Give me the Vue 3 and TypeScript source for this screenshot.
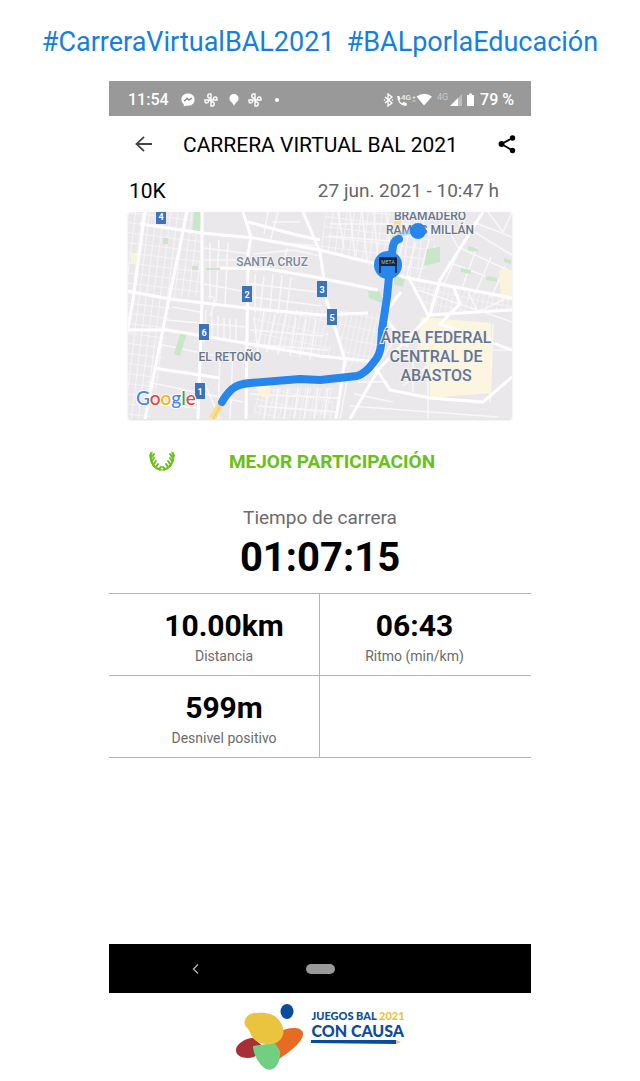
<script setup lang="ts">
interface Stat {
  value: string
  label: string
}

interface Marker {
  n: number
  x: number
  y: number
}

const stats: Stat[] = [
  { value: '10.00km', label: 'Distancia' },
  { value: '06:43', label: 'Ritmo (min/km)' },
  { value: '599m', label: 'Desnivel positivo' },
]

const markers: Marker[] = [
  { n: 4, x: 33, y: 4 },
  { n: 2, x: 119, y: 82 },
  { n: 3, x: 194, y: 77 },
  { n: 5, x: 204, y: 105 },
  { n: 6, x: 76, y: 120 },
  { n: 1, x: 72, y: 179 },
]

const mainRoads: string[] = [
  'M17 0L5 88L0 116',
  'M59 0L42 82L17 207',
  'M74 0V88L70 207',
  'M115 0L123 25L120 42L118 207',
  'M12 12L74 21L126 26L192 38L245 51L275 65L384 86',
  'M0 79L42 87L119 96L192 103L240 101',
  'M0 118L39 118L99 128L192 144L250 150',
  'M25 156L92 166',
  'M175 0L192 40L199 90L217 148L208 207',
  'M355 0L312 68L302 103L250 158L222 207',
  'M247 155L262 178L302 186L355 190L384 165',
  'M302 103L384 98',
  'M120 10L165 22L192 28',
  'M92 56L140 57L192 66L250 78',
  'M280 64L300 103',
  'M325 73L332 92L312 112L384 138',
  'M273 80L255 103L280 135',
]

const sideRoads: string[] = [
  'M125 42L165 38L192 44M140 0L136 22M150 0L142 30L190 34M159 36L155 55M144 10H172',
  'M82 30V88M91 28L88 90M100 30L97 92M76 36L122 42M76 48H120M76 72L119 80',
  'M127 62V100M136 64L132 100M145 62L142 98M154 64L150 102M163 65L158 104M122 72L190 80M124 85L194 94',
  'M44 95L72 100M38 108L118 115M78 98L76 130M84 100V126M90 104V126M96 106V128M102 106V130M108 107V130',
  'M80 85Q88 83 86 92L82 104M30 132L118 150M20 170L115 190M8 190L70 196M76 170L92 207M92 140L90 207M105 140L102 207',
  'M126 105L130 140M136 98L130 134M147 103L139 140M158 104L150 142M168 106L162 144M178 107L172 145M188 108L182 148',
  'M122 118L195 124M122 132L200 138M122 182L210 186M130 194L210 200M140 176L136 207M150 176L146 207M160 176L156 207M170 176L166 207M180 176L176 207M190 176L186 207M200 176L196 207',
  'M202 12H280M200 24L275 30M210 0L216 36M222 0L227 44M234 0L239 48M246 0L250 50M258 0L264 50',
  'M275 30L262 80M288 30L278 66M301 28L290 70M310 0L330 35L384 60M335 30L316 72M349 35L334 76M363 45L347 82M377 54L363 86M320 50L384 74',
  'M345 10L384 25M360 0L375 20L384 0M340 16L384 43M290 78L384 110M340 80L350 100L384 84',
  'M220 164L212 207M230 170H260M226 182L265 190M222 194L370 205M265 130L246 158M275 174L310 145M285 140V180M300 113V207M365 112L362 190M384 138H365',
]
</script>

<template>
  <main class="page">
    <h1 class="tags">
      <a href="#carrera">#CarreraVirtualBAL2021</a>
      <a href="#causa">#BALporlaEducación</a>
    </h1>

    <section class="phone">
      <div class="status">
        <span class="clock">11:54</span>
        <svg class="glyph messenger" width="14" height="14" viewBox="0 0 14 14">
          <path d="M7 0.5C3 .5.4 3.200.4 6.600c0 2 .9 3.600 2.400 4.700v2.300l2.300-1.200c4.600 1.200 8.500-1.600 8.500-5.700C13.600 3.200 11 .5 7 .5z" fill="#fff" />
          <path d="M3.200 8.200L6 5.200l2 1.900 2.900-1.900" fill="none" stroke="#8a8a8a" stroke-width="1.500" />
        </svg>
        <svg class="glyph" width="14" height="14" viewBox="0 0 14 14">
          <path d="M7 7V1H5.500Q3.800 1 3.800 3T5.500 5H7M7 7h6V5.500Q13 4 11.300 4T9.500 5.500V7M7 7v6h1.500q1.700 0 1.700-2T8.500 9H7M7 7H1v1.500Q1 10 2.700 10T4.500 8.500V7" fill="none" stroke="#fff" stroke-width="1.400" />
        </svg>
        <svg class="glyph pin" width="10" height="12" viewBox="0 0 10 12">
          <path d="M5 0a4.600 4.600 0 0 1 4.600 4.600C9.600 7.500 6.200 8.500 5 12 3.800 8.500.4 7.500.4 4.600A4.600 4.600 0 0 1 5 0z" fill="#fff" />
        </svg>
        <svg class="glyph" width="14" height="14" viewBox="0 0 14 14">
          <path d="M7 7V1H5.500Q3.800 1 3.800 3T5.500 5H7M7 7h6V5.500Q13 4 11.300 4T9.500 5.500V7M7 7v6h1.500q1.700 0 1.700-2T8.500 9H7M7 7H1v1.500Q1 10 2.700 10T4.500 8.500V7" fill="none" stroke="#fff" stroke-width="1.400" />
        </svg>
        <i class="dot"></i>
        <svg class="signals" width="94" height="16" viewBox="0 0 94 16">
          <path d="M2 5l7 6-4 3V2l4 3-7 6" fill="none" stroke="#fff" stroke-width="1.300" />
          <circle cx="1.500" cy="8" r=".8" fill="#fff" /><circle cx="9.500" cy="8" r=".8" fill="#fff" />
          <path d="M14 4h2.500l1 3-1.200 1.300q1 2 2.700 3L20.500 10l3.300 1v2.500Q15.500 15 14 4z" fill="#fff" />
          <text x="18" y="8" font-size="8" font-weight="500" fill="#eee">4G</text>
          <path d="M29.500 5.500h3M31 4v3M29.500 9h3" stroke="#ddd" stroke-width="1" />
          <path d="M33.500 4.500Q41-1 49 4.500L41 13.500z" fill="#fff" />
          <text x="54" y="8" font-size="9" font-weight="400" fill="#c9c9c9">4G</text>
          <path d="M67 14L79 2v12z" fill="#bdbdbd" /><path d="M67 14l8-8v8z" fill="#fff" />
          <path d="M84 3h2V1.500h3V3h2v11h-7z" fill="#fff" />
        </svg>
        <span class="battery">79 %</span>
      </div>

      <header class="bar">
        <button class="icon back" type="button" aria-label="Volver">
          <svg width="18" height="18" viewBox="0 0 18 18">
            <path d="M17 8H2M9 .8L1.500 8 9 15.200" fill="none" stroke="#444" stroke-width="1.800" />
          </svg>
        </button>
        <h2>CARRERA VIRTUAL BAL 2021</h2>
        <button class="icon share" type="button" aria-label="Compartir">
          <svg width="18" height="20" viewBox="0 0 18 20">
            <path d="M14.500 3L3.500 9l11 6.500" fill="none" stroke="#000" stroke-width="1.800" />
            <circle cx="14.500" cy="3" r="2.700" /><circle cx="3.500" cy="9" r="2.900" /><circle cx="14.500" cy="15.500" r="2.700" />
          </svg>
        </button>
      </header>

      <div class="race">
        <span class="distance">10K</span>
        <time datetime="2021-06-27T10:47">27 jun. 2021 - 10:47 h</time>
      </div>

      <svg class="map" viewBox="0 0 384 207" role="img" aria-label="Recorrido">
        <defs>
          <pattern id="grid-a" width="7" height="10" patternUnits="userSpaceOnUse" patternTransform="rotate(7)">
            <path d="M0 0H7M0 0V10" stroke="#f8f7f9" stroke-width="1.700" />
          </pattern>
          <pattern id="grid-b" width="5" height="13" patternUnits="userSpaceOnUse" patternTransform="rotate(12)">
            <path d="M0 0H5M0 0V13" stroke="#f6f5f7" stroke-width="1.400" />
          </pattern>
        </defs>
        <rect width="384" height="207" fill="#ebe8ec" />
        <path d="M12 0H72V84L44 86L40 118L22 207H0V0z" fill="url(#grid-a)" />
        <path d="M198 0H300L310 48L280 66L192 38z" fill="url(#grid-a)" />
        <path d="M126 98H195L205 145L126 136zM126 176H205V207H126zM202 98L252 102L246 150L216 155z" fill="url(#grid-b)" />
        <path d="M285 68L384 86V98L302 103z" fill="url(#grid-b)" />
        <g fill="none" stroke="#f8f7f9" stroke-width="1.500">
          <path v-for="road in sideRoads" :key="road" :d="road" />
        </g>
        <path d="M66 0h8l-2 20h-8zM35 26h5v6h-5zM64 54h6v4h-6zM78 58h14v-2h-14zM53 119l6 2-7 23-6-2zM299 37l13-2v15l-16 4zM340 34l10 3v3l-10-2zM376 46l7 2v4l-7-2zM333 56l10 2v4l-10-2zM358 64l11 2v4l-11-2zM265 64l12 2-2 9-8-2zM240 79h11l3 6v6l-13-5z" fill="#c8e6c8" />
        <path d="M293 105L363 111V181L302 186V155L289 145z" fill="#fcf5df" />
        <path d="M371 58h13v30h-11zM3 42h6v10h-6zM126 173h16v12h-8z" fill="#fbf3dc" />
        <g fill="none" stroke="#fff" stroke-width="3" stroke-linejoin="round">
          <path v-for="road in mainRoads" :key="road" :d="road" />
        </g>
        <path d="M94 190L84 207M270 8l-3 22" stroke="#f8de8d" stroke-width="7" />
        <path d="M93 192L85 207" stroke="#f0c76a" stroke-width="1" />
        <g class="places" text-anchor="middle">
          <text x="302" y="8" font-size="12">BRAMADERO</text>
          <text x="302" y="22" font-size="12">RAMOS MILLÁN</text>
        </g>
        <path d="M285 20L272 22L267 29" fill="none" stroke="#8dc2f7" stroke-width="4" opacity=".6" />
        <path class="route" d="M271 27Q266 28 265 34L262 55L259 85L254 118L253 133Q252 144 245 151Q238 161 229 164L192 168L172 167L122 171Q110 172 104 177Q97 184 94 190" />
        <circle cx="260" cy="53" r="14" fill="#2785ee" />
        <path d="M252 61V46h16v15" fill="none" stroke="#182538" stroke-width="1.500" />
        <path d="M251 46h18v8h-18z" fill="#182538" />
        <text x="260" y="52" font-size="5" text-anchor="middle" fill="#abc">META</text>
        <g class="places" text-anchor="middle">
          <text x="144" y="54" font-size="12" fill="#7b8799">SANTA CRUZ</text>
          <text x="102" y="149" font-size="12">EL RETOÑO</text>
          <text x="308" y="131" font-size="16">ÁREA FEDERAL</text>
          <text x="308" y="150" font-size="16">CENTRAL DE</text>
          <text x="308" y="169" font-size="16">ABASTOS</text>
        </g>
        <circle cx="290" cy="19" r="8" fill="#2785ee" />
        <g v-for="m in markers" :key="m.n">
          <rect :x="m.x - 5" :y="m.y - 8" width="10" height="16" fill="#3d72bd" />
          <text :x="m.x" :y="m.y + 4" font-size="9" font-weight="700" text-anchor="middle" fill="#fff">{{ m.n }}</text>
        </g>
        <text class="brand" x="8" y="193"><tspan fill="#4285f4">G</tspan><tspan fill="#ea4335">o</tspan><tspan fill="#eeb211">o</tspan><tspan fill="#4285f4">g</tspan><tspan fill="#34a853">l</tspan><tspan fill="#ea4335">e</tspan></text>
      </svg>

      <div class="award">
        <svg width="26" height="24" viewBox="0 0 26 24" fill="none" stroke="#67c116" stroke-linecap="round">
          <path d="M3 2Q-1 20 13 20Q27 20 23 2" stroke-width="1" />
          <path d="M2 3L1 6M1.500 7L2 10M2 11l2 3M4 15l3 2M8 18l3 2M5 4L3 7M5 8L3 11M7 11L5 14M9 14L7 17M12 17l-2 2" stroke-width="1.900" />
          <path d="M24 3L25 6M24.500 7L24 10M24 11l-2 3M22 15l-3 2M18 18l-3 2M21 4L23 7M21 8L23 11M19 11L21 14M17 14L19 17M14 17l2 2" stroke-width="1.900" />
        </svg>
        <strong>MEJOR PARTICIPACIÓN</strong>
      </div>

      <div class="total">
        <span>Tiempo de carrera</span>
        <strong>01:07:15</strong>
      </div>

      <dl class="stats">
        <div v-for="stat in stats" :key="stat.label" class="cell">
          <dt>{{ stat.label }}</dt>
          <dd>{{ stat.value }}</dd>
        </div>
        <div class="cell"></div>
      </dl>

      <nav class="system">
        <button class="icon" type="button" aria-label="Atrás">
          <svg width="8" height="12" viewBox="0 0 8 12">
            <path d="M6 1.500L1.500 6 6 10.500" fill="none" stroke="#aaa" stroke-width="1.500" />
          </svg>
        </button>
        <button class="home" type="button" aria-label="Inicio"></button>
      </nav>
    </section>

    <footer class="sponsor">
      <svg width="68" height="68" viewBox="0 0 68 68">
        <path d="M18 35C10 35 0 42 1 48C2 55 12 56 19 54L30 45z" fill="#a82f35" />
        <path d="M43 29C51 25 66 22 68 30C69 38 56 48 44 56L34 50z" fill="#e96b22" />
        <path d="M18 43C18 51 24 62 31 66C42 70 46 55 45 48L40 40z" fill="#70cf80" />
        <path d="M22 10C12 9 7 18 11 24C17 28 14 36 26 40C40 45 51 36 48 25C44 12 34 9 22 10z" fill="#ebc43f" />
        <ellipse cx="52" cy="8.500" rx="6.500" ry="7.500" fill="#0b4b9b" />
      </svg>
      <div class="words">
        <span class="games">JUEGOS BAL <b>2021</b></span>
        <span class="cause">CON CAUSA</span>
        <svg width="90" height="6" viewBox="0 0 90 6">
          <path d="M0 1L85 1V5L0 4z" fill="#0b4b9b" /><path d="M85 1l5 2-5 2z" fill="#e3c27a" />
        </svg>
      </div>
    </footer>
  </main>
</template>

<style>
body {
  background: #fff;
}
</style>

<style scoped>
.page {
  font-family: Roboto, "Liberation Sans", sans-serif;
  color: #000;
}
.page svg {
  flex: none;
}
.tags {
  display: flex;
  justify-content: center;
  gap: 12px;
  margin: 0;
  padding: 24px 0 21px;
  font-size: 27px;
  line-height: 36px;
  font-weight: 400;
}
.tags a {
  color: #147fdc;
  text-decoration: none;
}
.phone {
  max-width: 422px;
  margin: 0 auto;
}
.status {
  display: flex;
  align-items: center;
  box-sizing: border-box;
  height: 35px;
  padding: 2px 17px 0 19px;
  background: #999;
  color: #fff;
  font-size: 16px;
  font-weight: 500;
}
.glyph {
  margin-left: 9px;
}
.messenger {
  margin-left: 12px;
}
.pin {
  margin-left: 11px;
}
.dot {
  width: 4px;
  height: 4px;
  margin-left: 13px;
  border-radius: 50%;
  background: #fff;
}
.signals {
  margin-left: auto;
}
.battery {
  margin-left: 3px;
}
.icon {
  display: flex;
  padding: 0;
  border: 0;
  background: none;
}
.bar {
  display: flex;
  align-items: center;
  height: 57px;
  padding: 0 15px 0 26px;
}
.bar h2 {
  flex: 1;
  margin: 0 0 0 30px;
  font-size: 21px;
  line-height: 28px;
  font-weight: 400;
}
.race {
  display: flex;
  justify-content: space-between;
  padding: 4px 32px 0 20px;
  font-size: 21px;
  line-height: 28px;
}
.race time {
  color: #666;
  font-size: 19px;
}
.map {
  display: block;
  width: calc(100% - 38px);
  margin: 7px 19px 0;
  border-radius: 3px;
  box-shadow: 0 1px 2px #ddd;
}
.route {
  fill: none;
  stroke: #2785ee;
  stroke-width: 8px;
  stroke-linecap: round;
  stroke-linejoin: round;
}
.places {
  fill: #66758a;
  font-weight: 500;
  stroke: #f5f4f6;
  stroke-width: 2px;
  paint-order: stroke;
}
.brand {
  font-family: Lato, sans-serif;
  font-size: 19px;
  font-weight: 500;
  stroke: #fff;
  stroke-width: 2px;
  paint-order: stroke;
}
.award {
  display: grid;
  grid-template-columns: 26px 1fr 26px;
  align-items: center;
  padding: 29px 40px 0;
  line-height: 28px;
  text-align: center;
  color: #67c116;
  font-size: 19px;
}
.award strong {
  padding-left: 24px;
  font-weight: 700;
}
.total {
  display: flex;
  flex-direction: column;
  padding-top: 30px;
  text-align: center;
  color: #6b6b6b;
  font-size: 19px;
  line-height: 24px;
}
.total strong {
  color: #000;
  font-size: 40px;
  line-height: 56px;
}
.stats {
  display: grid;
  grid-template-columns: 1fr 1fr;
  margin: 7px 0 0;
  border-top: 1px solid #b5b5b5;
}
.cell {
  display: flex;
  flex-direction: column-reverse;
  justify-content: flex-end;
  box-sizing: border-box;
  height: 82px;
  padding: 13px 0 0 20px;
  border-bottom: 1px solid #b5b5b5;
  text-align: center;
}
.cell:nth-child(odd) {
  border-right: 1px solid #b5b5b5;
}
.cell:nth-child(even) {
  padding: 13px 22px 0 0;
}
.cell dt {
  color: #6b6b6b;
  font-size: 14px;
  line-height: 22px;
}
.cell dd {
  margin: 0;
  font-size: 30px;
  line-height: 38px;
  font-weight: 700;
}
.system {
  display: grid;
  grid-template-columns: 1fr auto 1fr;
  align-items: center;
  height: 49px;
  margin-top: 186px;
  background: #000;
}
.system .icon {
  justify-self: center;
  padding-right: 22px;
}
.home {
  width: 29px;
  height: 10px;
  padding: 0;
  border: 0;
  border-radius: 5px;
  background: #999;
}
.sponsor {
  display: flex;
  justify-content: center;
  gap: 8px;
  padding-top: 10px;
}
.words {
  display: flex;
  flex-direction: column;
  padding-top: 6px;
  color: #0b4b9b;
  font-family: Lato, sans-serif;
  font-weight: 900;
}
.games {
  font-size: 11px;
  line-height: 13px;
}
.games b {
  color: #ebc43f;
}
.cause {
  font-size: 16px;
  line-height: 17px;
}
</style>
